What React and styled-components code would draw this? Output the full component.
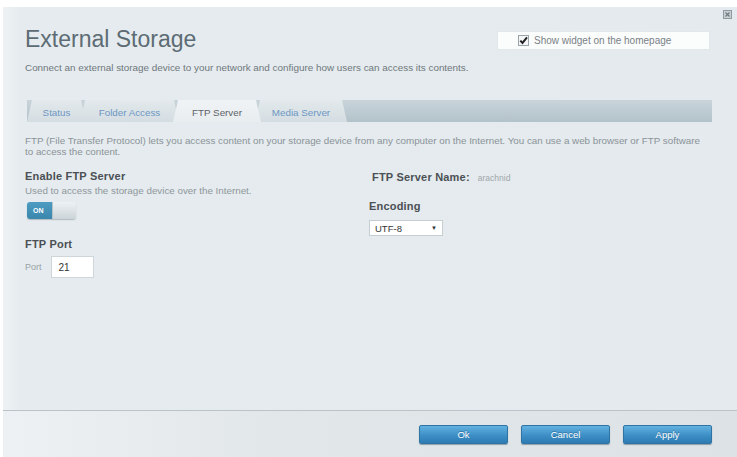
import React from 'react'
import styled, { createGlobalStyle } from 'styled-components'

const GlobalStyle = createGlobalStyle`
  html, body {
    margin: 0;
    padding: 0;
    background: #ffffff;
  }
  body {
    font-family: "Liberation Sans", Arial, sans-serif;
  }
`

const tabs = [
  { label: 'Status', width: 59 },
  { label: 'Folder Access', width: 99 },
  { label: 'FTP Server', width: 88, active: true },
  { label: 'Media Server', width: 92 },
]

const App = () => {
  return (
    <>
      <GlobalStyle />
      <Panel>
        <CloseBox aria-label='close'>
          <svg width='9' height='9' viewBox='0 0 9 9'>
            <rect x='0.5' y='0.5' width='8' height='8' fill='#c9d1d5' stroke='#8f9a9f' />
            <path d='M2.5 2.5 L6.5 6.5 M6.5 2.5 L2.5 6.5' stroke='#6f7a80' strokeWidth='1.2' />
          </svg>
        </CloseBox>

        <Header>
          <div>
            <Title>External Storage</Title>
            <Subtitle>
              Connect an external storage device to your network and configure how users can access its contents.
            </Subtitle>
          </div>
          <WidgetBox>
            <CheckMark>
              <svg width='11' height='11' viewBox='0 0 11 11'>
                <rect x='0.5' y='0.5' width='10' height='10' fill='#f4f6f7' stroke='#9aa4a9' />
                <path d='M2.3 5.6 L4.5 8 L9 2.4' fill='none' stroke='#222' strokeWidth='2' />
              </svg>
            </CheckMark>
            Show widget on the homepage
          </WidgetBox>
        </Header>

        <TabBand>
          {tabs.map(tab => (
            <Tab key={tab.label} $active={tab.active} $width={tab.width}>
              {tab.label}
            </Tab>
          ))}
        </TabBand>

        <Content>
          <Intro>
            FTP (File Transfer Protocol) lets you access content on your storage device from any computer on the Internet. You can use a web browser or FTP software to access the content.
          </Intro>

          <Columns>
            <Column>
              <Heading>Enable FTP Server</Heading>
              <Hint>Used to access the storage device over the Internet.</Hint>
              <Toggle>
                <ToggleOn>ON</ToggleOn>
                <ToggleKnob />
              </Toggle>

              <Heading $gap='18px'>FTP Port</Heading>
              <PortRow>
                <FieldLabel>Port</FieldLabel>
                <TextBox>21</TextBox>
              </PortRow>
            </Column>

            <Column>
              <NameRow>
                <Heading>FTP Server Name:</Heading>
                <ServerName>arachnid</ServerName>
              </NameRow>
              <Heading $gap='15px'>Encoding</Heading>
              <Select>
                UTF-8
                <Arrow>▼</Arrow>
              </Select>
            </Column>
          </Columns>
        </Content>

        <Footer>
          <Button>Ok</Button>
          <Button>Cancel</Button>
          <Button>Apply</Button>
        </Footer>
      </Panel>
    </>
  )
}

export default App

const Panel = styled.div`
  position: relative;
  box-sizing: border-box;
  margin: 7px 0 0 3px;
  height: 450px;
  display: flex;
  flex-direction: column;
  background: linear-gradient(to right, #eef2f4 0px, #e5ebee 18px, #e4eaed 100%);
`

const CloseBox = styled.div`
  position: absolute;
  top: 3px;
  right: 5px;
  width: 9px;
  height: 9px;
  line-height: 0;
`

const Header = styled.div`
  display: flex;
  justify-content: space-between;
  align-items: flex-start;
  padding: 19px 27px 0 22px;
`

const Title = styled.h1`
  margin: 0;
  font-size: 23px;
  line-height: 26px;
  font-weight: normal;
  color: #5d6c74;
`

const Subtitle = styled.p`
  margin: 10px 0 0;
  font-size: 9.9px;
  line-height: 12px;
  color: #6f777c;
  white-space: nowrap;
`

const WidgetBox = styled.div`
  margin-top: 5px;
  box-sizing: border-box;
  flex: 0 0 213px;
  height: 19px;
  display: flex;
  align-items: center;
  gap: 5px;
  padding-left: 20px;
  background: #fbfcfc;
  border: 1px solid #e2e7ea;
  font-size: 10px;
  color: #7a8186;
`

const CheckMark = styled.span`
  display: inline-flex;
  line-height: 0;
`

const TabBand = styled.div`
  display: flex;
  margin: 26px 25px 0 24px;
  height: 22px;
  background: linear-gradient(to bottom, #c9d4da 0%, #b3c2ca 100%);
`

const Tab = styled.div`
  position: relative;
  z-index: ${p => (p.$active ? 2 : 1)};
  flex: 0 0 ${p => p.$width}px;
  margin-right: -6px;
  display: flex;
  align-items: center;
  justify-content: center;
  padding-top: 2px;
  box-sizing: border-box;
  font-size: 9.8px;
  color: ${p => (p.$active ? '#5d6469' : '#6d97c3')};
  background: ${p =>
    p.$active
      ? 'linear-gradient(to bottom, #f0f3f5 0%, #e8edf0 100%)'
      : 'linear-gradient(to bottom, #e3e9ec 0%, #d4dde2 100%)'};
  clip-path: polygon(5px 0, calc(100% - 5px) 0, 100% 100%, 0 100%);
`

const Content = styled.div`
  flex: 1;
  padding: 13px 25px 0 22px;
`

const Intro = styled.p`
  margin: 0;
  max-width: 680px;
  font-size: 9.8px;
  line-height: 11px;
  color: #8b9399;
`

const Columns = styled.div`
  display: grid;
  grid-template-columns: 344px 1fr;
  margin-top: 12px;
`

const Column = styled.div`
  display: flex;
  flex-direction: column;
  align-items: flex-start;
`

const Heading = styled.div`
  margin-top: ${p => p.$gap || '0'};
  font-size: 11px;
  line-height: 14px;
  font-weight: bold;
  color: #4b5055;
  letter-spacing: 0.2px;
`

const Hint = styled.div`
  margin-top: 2px;
  font-size: 9.8px;
  line-height: 12px;
  color: #8f979c;
`

const Toggle = styled.div`
  margin: 5px 0 0 2px;
  display: flex;
  width: 49px;
  height: 17px;
  border-radius: 3px;
  overflow: hidden;
  box-shadow: 0 1px 1px rgba(80, 100, 110, 0.35);
`

const ToggleOn = styled.div`
  flex: 0 0 25px;
  display: flex;
  align-items: center;
  padding-left: 6px;
  box-sizing: border-box;
  background: linear-gradient(to bottom, #4e9cc2 0%, #3a86ad 100%);
  color: #ffffff;
  font-size: 7px;
  font-weight: bold;
`

const ToggleKnob = styled.div`
  flex: 1;
  background: linear-gradient(to bottom, #eef2f4 0%, #cbd4d9 100%);
  border-left: 1px solid #b6c2c8;
`

const PortRow = styled.div`
  margin-top: 5px;
  display: flex;
  align-items: center;
  gap: 9px;
`

const FieldLabel = styled.span`
  font-size: 9px;
  color: #9aa2a7;
`

const TextBox = styled.div`
  box-sizing: border-box;
  width: 43px;
  height: 22px;
  display: flex;
  align-items: center;
  padding-left: 7px;
  background: #ffffff;
  border: 1px solid #cfd6da;
  font-size: 10px;
  color: #333;
`

const NameRow = styled.div`
  display: flex;
  align-items: baseline;
  gap: 8px;
  margin: 1px 0 0 3px;
`

const ServerName = styled.span`
  font-size: 8.5px;
  color: #a0a7ab;
`

const Select = styled.div`
  margin-top: 7px;
  box-sizing: border-box;
  width: 74px;
  height: 16px;
  display: flex;
  align-items: center;
  justify-content: space-between;
  padding: 0 5px 0 5px;
  background: #ffffff;
  border: 1px solid #c7ced2;
  font-size: 9.5px;
  color: #333;
`

const Arrow = styled.span`
  font-size: 6px;
  color: #333;
`

const Footer = styled.div`
  flex: 0 0 47px;
  box-sizing: border-box;
  display: flex;
  justify-content: flex-end;
  align-items: flex-start;
  gap: 13px;
  padding: 14px 25px 0 0;
  border-top: 1px solid #b9c3c8;
  background: linear-gradient(to right, #eef1f3 0%, #e2e7ea 35%, #dce2e5 100%);
`

const Button = styled.button`
  width: 89px;
  height: 19px;
  padding: 0;
  border: 1px solid #2f74a4;
  border-radius: 2px;
  background: linear-gradient(to bottom, #62b1e0 0%, #3d8fc6 55%, #2d7bb2 100%);
  box-shadow: 0 1px 1px rgba(40, 70, 90, 0.45);
  color: #ffffff;
  font-family: "Liberation Sans", Arial, sans-serif;
  font-size: 9.5px;
  text-shadow: 0 -1px 0 rgba(20, 60, 90, 0.4);
  cursor: pointer;
`
